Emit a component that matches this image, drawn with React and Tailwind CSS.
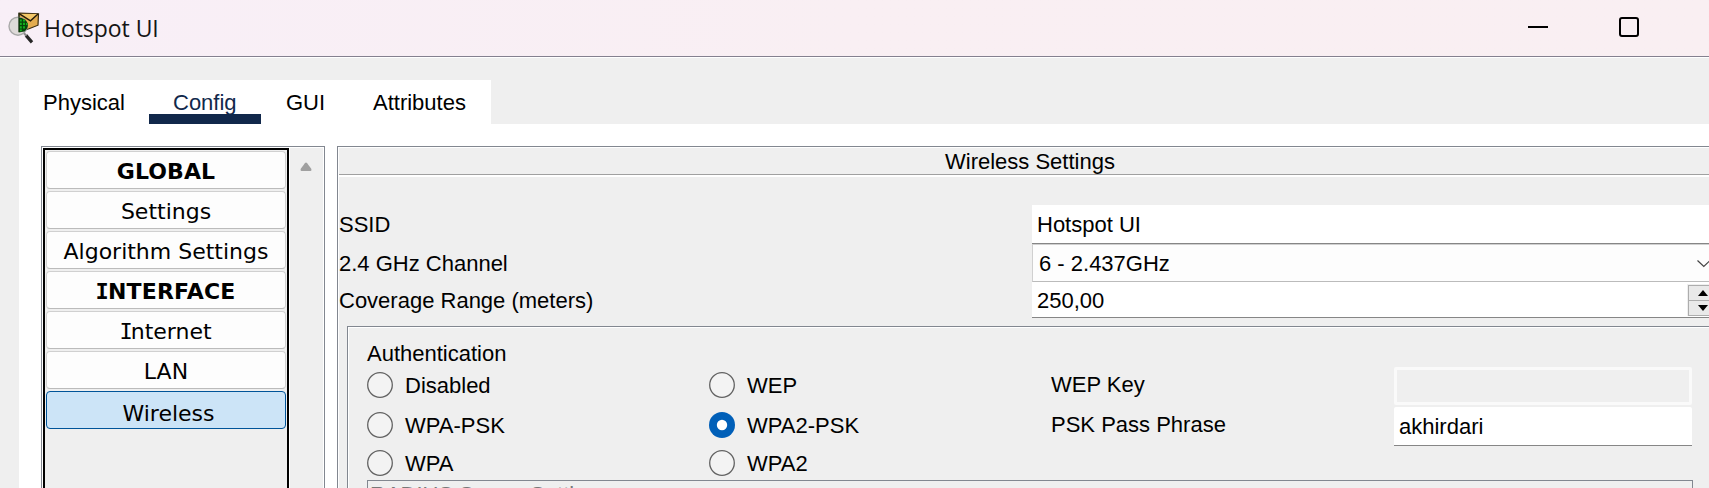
import React from "react";

function AppIcon() {
  return (
    <svg viewBox="0 0 34 34" className="h-[34px] w-[34px] shrink-0">
      <path d="M12 2.2 L31.5 2.8 L31 14.2 L22 17.8 L12 20.6 Z" fill="#e3ac50" stroke="#3a2c12" strokeWidth="1.2" />
      <path d="M12.5 2.8 L23.5 9.8 L31 3" fill="#f3c768" stroke="#241a08" strokeWidth="1.4" />
      <circle cx="11" cy="15.2" r="9" fill="#dedad9" stroke="#a9a9a9" strokeWidth="1.4" />
      <path d="M11.6 6.5 Q18.5 7 20.8 12.5 Q21.5 17 17.5 20.6 L11.6 21.4 Z" fill="#07450b" />
      <path d="M12.8 8.4h2v2.2h-2zM16 8.4h2v2.2h-2zM12.8 11.8h2V14h-2zM16 11.8h2V14h-2zM19 12h1.4v2H19zM12.8 15.2h2v2.2h-2zM16 15.2h2v2.2h-2zM12.8 18.6h2v1.6h-2z" fill="#12b01c" />
      <path d="M12 2 V21" stroke="#14260c" strokeWidth="0.9" />
      <path d="M19 24.4 L25 31.4" stroke="#262626" strokeWidth="3.2" />
      <path d="M17 22.2 L19.4 24.8" stroke="#8a8a8a" strokeWidth="2" />
    </svg>
  );
}

function TitleBar() {
  return (
    <header className="flex h-[58px] shrink-0 items-start border-b border-white bg-linear-to-r from-[#f8eff7] via-[#f9eff3] to-[#f9eff2]">
      <div className="flex h-[57px] w-full items-start border-b border-[#84808f] pl-[7px]">
        <div className="pt-[11px]">
          <AppIcon />
        </div>
        <h1 className="ml-[3px] mt-[11px] grow font-['Open_Sans',sans-serif] text-[23px] leading-[34px] tracking-[-0.05px] text-[#151515]">
          Hotspot UI
        </h1>
        <svg viewBox="0 0 22 22" className="mr-[70px] mt-[16px] h-[22px] w-[22px]">
          <path d="M1 11H21" stroke="#000" strokeWidth="2" />
        </svg>
        <svg viewBox="0 0 20 20" className="mr-[70px] mt-[17px] h-[20px] w-[20px]">
          <rect x="1" y="1" width="18" height="18" rx="2" fill="none" stroke="#000" strokeWidth="2" />
        </svg>
      </div>
    </header>
  );
}

function Tabs() {
  return (
    <nav className="flex h-[44px] w-[472px] bg-white pt-[6px] text-black">
      <div className="w-[130px] pl-[24px] leading-[34px]">Physical</div>
      <div className="h-[38px] w-[112px] border-b-[10px] border-[#11284b] pl-[24px] leading-[34px] text-[#11284b]">Config</div>
      <div className="w-[88px] pl-[25px] leading-[34px]">GUI</div>
      <div className="pl-[24px] leading-[34px]">Attributes</div>
    </nav>
  );
}

function SideButton({ children }) {
  return (
    <button className="h-[38px] shrink-0 rounded-[4px] border border-[#d0d0d0] border-b-[#bbbbbb] bg-[#fdfdfd] pt-[3px] leading-[33px]">
      {children}
    </button>
  );
}

function Sidebar() {
  return (
    <aside className="flex h-[400px] w-[284px] shrink-0 border border-[#828790] bg-white p-px">
      <div className="flex w-[246px] flex-col gap-[2px] border-2 border-black bg-[#efefef] p-px font-['DejaVu_Sans',sans-serif] text-[22px]">
        <SideButton><b className="tracking-[0.1px]">GLOBAL</b></SideButton>
        <SideButton>Settings</SideButton>
        <SideButton>Algorithm Settings</SideButton>
        <SideButton>
          <b className="tracking-[0.2px]"><span className="-ml-px -mr-px font-['DejaVu_Sans_Mono',monospace] leading-none">I</span>NTERFACE</b>
        </SideButton>
        <SideButton>
          <span className="-ml-px -mr-[2px] font-['DejaVu_Sans_Mono',monospace] leading-none">I</span>nternet
        </SideButton>
        <SideButton>LAN</SideButton>
        <button className="h-[38px] shrink-0 rounded-[4px] border border-[#005499] bg-[#cce4f7] pl-[5px] pt-[7px] leading-[29px]">Wireless</button>
      </div>
      <div className="ml-px flex grow justify-center bg-[#efefef] pr-px pt-[14px]">
        <svg viewBox="0 0 12 10" className="h-[10px] w-[12px]">
          <path d="M5 1 Q6 0 7 1 L11.4 7 Q11.8 9 10.6 9 H1.4 Q.2 9 .6 7 Z" fill="#a0a0a0" />
        </svg>
      </div>
    </aside>
  );
}

function Radio({ label, checked }) {
  return (
    <label className="flex items-center gap-[12px]">
      <svg viewBox="0 0 26 26" className="h-[26px] w-[26px] shrink-0">
        {checked ? (
          <>
            <circle cx="13" cy="13" r="13" fill="#005fb8" />
            <circle cx="13" cy="13" r="5.2" fill="#fff" />
          </>
        ) : (
          <circle cx="13" cy="13" r="12.3" fill="#f3f3f3" stroke="#626262" strokeWidth="1.3" />
        )}
      </svg>
      <span className="h-[26px] whitespace-nowrap leading-[27px]">{label}</span>
    </label>
  );
}

function Authentication() {
  return (
    <section className="ml-[8px] mt-[8px] h-[200px] border-l border-t border-[#828790]">
      <div className="h-full border-l border-t border-white pl-[18px] pt-[13px]">
        <h2 className="leading-[26px]">Authentication</h2>
        <div className="mt-[5px] flex">
          <div className="flex w-[342px] flex-col">
            <Radio label="Disabled" />
            <div className="h-[14px]" />
            <Radio label="WPA-PSK" />
            <div className="h-[12px]" />
            <Radio label="WPA" />
          </div>
          <div className="flex w-[342px] flex-col">
            <Radio label="WEP" />
            <div className="h-[14px]" />
            <Radio label="WPA2-PSK" checked />
            <div className="h-[12px]" />
            <Radio label="WPA2" />
          </div>
          <div className="w-[343px] leading-[26px]">
            <div>WEP Key</div>
            <div className="mt-[14px]">PSK Pass Phrase</div>
          </div>
          <div className="-mt-[5px] w-[298px]">
            <div className="h-[38px] rounded-[2px] border-[3px] border-[#fafafa] bg-[#efefef]" />
            <div className="mt-[2px] h-[39px] rounded-t-[2px] border-b border-[#868686] bg-white pl-[5px] leading-[40px]">akhirdari</div>
          </div>
        </div>
        <div className="mt-[4px] h-[40px] w-[1326px] border border-[#828790] pl-[2px] pt-px leading-[26px] text-[#787878]">
          RADIUS Server Settings
        </div>
      </div>
    </section>
  );
}

function WirelessPanel() {
  return (
    <main className="ml-[12px] h-[400px] grow border-l border-t border-[#828790]">
      <div className="h-full border-l border-t border-white bg-[#efefef]">
        <div className="h-[29px] border-b-2 border-white">
          <h2 className="h-[27px] border-b border-[#a0a0a0] pl-[606px] leading-[28px]">Wireless Settings</h2>
        </div>
        <div className="mt-[28px] flex">
          <div className="w-[693px] whitespace-nowrap">
            <div className="h-[39px] leading-[39px]">SSID</div>
            <div className="h-[39px] leading-[39px]">2.4 GHz Channel</div>
            <div className="h-[35px] leading-[36px]">Coverage Range (meters)</div>
          </div>
          <div className="grow">
            <div className="h-[39px] border-b border-[#868686] bg-white pl-[5px] leading-[39px]">Hotspot UI</div>
            <div className="flex h-[38px] justify-between border border-r-0 border-[#d0d0d0] border-b-[#bbbbbb] bg-[#fdfdfd] pl-[6px] leading-[38px]">
              6 - 2.437GHz
              <svg viewBox="0 0 12 14" className="mt-[12px] h-[14px] w-[12px]">
                <path d="M.5 3.5 L6.8 9.5 L13 3.5" fill="none" stroke="#444" strokeWidth="1.2" />
              </svg>
            </div>
            <div className="flex h-[36px] justify-between border-b border-[#868686] bg-white pl-[5px] leading-[38px]">
              250,00
              <div className="mt-[2px] flex h-[32px] w-[22px] flex-col border-l border-t border-[#efefef]">
                <div className="flex h-[16px] w-[21px] items-center justify-end border border-r-0 border-[#adadad] bg-[#e9e9e9]">
                  <svg viewBox="0 0 11 6" className="h-[6px] w-[11px]"><path d="M0 6 L5 0 L10 6Z" /></svg>
                </div>
                <div className="flex h-[15px] w-[21px] items-center justify-end border border-r-0 border-t-0 border-[#adadad] bg-[#e9e9e9]">
                  <svg viewBox="0 0 11 6" className="h-[6px] w-[11px]"><path d="M0 0 L5 6 L10 0Z" /></svg>
                </div>
              </div>
            </div>
          </div>
        </div>
        <Authentication />
      </div>
    </main>
  );
}

export default function App() {
  return (
    <div className="flex h-[488px] w-[1709px] flex-col overflow-hidden bg-[#efefef] font-['Liberation_Sans',Arial,sans-serif] text-[22px] text-black">
      <TitleBar />
      <div className="pl-[19px] pt-[22px]">
        <Tabs />
        <div className="flex h-[400px] bg-white pl-[22px] pt-[22px]">
          <Sidebar />
          <WirelessPanel />
        </div>
      </div>
    </div>
  );
}
